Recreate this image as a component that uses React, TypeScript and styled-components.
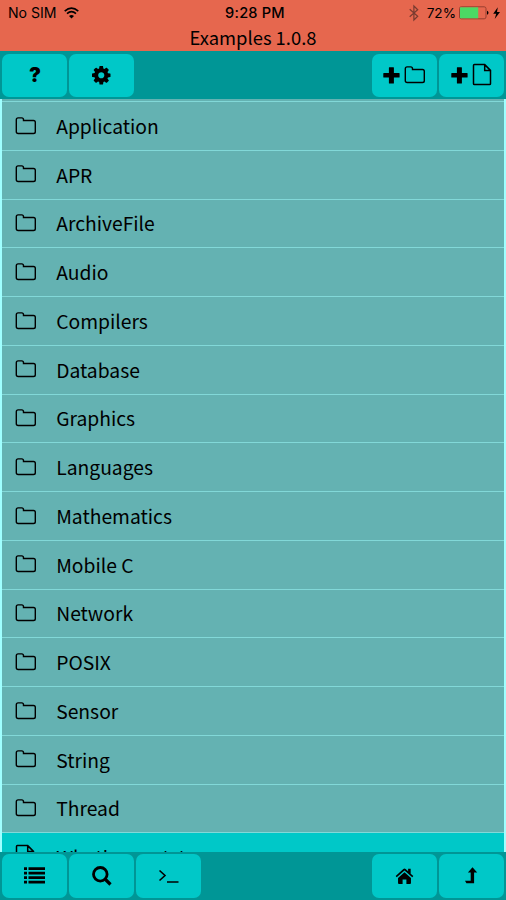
import React from "react";
import styled, { createGlobalStyle } from "styled-components";

const GlobalStyle = createGlobalStyle`
  * { box-sizing: border-box; }
  html, body { margin: 0; padding: 0; background: #009696; }
`;

const Screen = styled.div`
  width: 506px;
  height: 900px;
  display: flex;
  flex-direction: column;
  overflow: hidden;
  color: #000;
  background: #009696;
  font-family: "Noto Sans CJK SC", sans-serif;
`;

const Header = styled.header`
  flex: 0 0 51px;
  background: #e6674e;
`;

const StatusBar = styled.div`
  height: 25px;
  display: grid;
  grid-template-columns: 1fr auto 1fr;
  align-items: center;
  padding: 1px 5px 0 8px;
  font: 14.1px/24px Inter, sans-serif;
`;

const StatusGroup = styled.div<{ $end?: boolean }>`
  display: flex;
  align-items: center;
  justify-content: ${(p) => (p.$end ? "flex-end" : "flex-start")};
`;

const Carrier = styled.span`
  margin-right: 7px;
`;

const Clock = styled.span`
  padding-left: 1px;
  font-weight: 500;
  font-size: 14.6px;
  letter-spacing: 0.2px;
`;

const Percent = styled.span`
  margin: 0 3px 0 8px;
  font-size: 13.6px;
`;

const Title = styled.h1`
  margin: 0;
  height: 26px;
  font-size: 18.4px;
  line-height: 25px;
  font-weight: 400;
  text-align: center;
`;

const Toolbar = styled.nav<{ $bottom?: boolean }>`
  flex: 0 0 48px;
  display: flex;
  gap: 2px;
  padding: ${(p) => (p.$bottom ? "2px" : "3px")} 2px 2px;
  background: #009696;
`;

const ToolButton = styled.button<{ $push?: boolean }>`
  width: 65px;
  height: 100%;
  margin: 0 0 0 ${(p) => (p.$push ? "auto" : "0")};
  padding: 0;
  border: 0;
  border-radius: 7px;
  background: #00c8c8;
  display: flex;
  align-items: center;
  justify-content: center;
`;

const List = styled.ul`
  flex: 1;
  min-height: 0;
  margin: 0;
  padding: 2px 0 0;
  list-style: none;
  overflow: hidden;
  background: #64b2b2;
  border: solid #a0ffff;
  border-width: 0 2px;
`;

const Row = styled.li<{ $file?: boolean }>`
  height: 48.76px;
  display: flex;
  align-items: center;
  padding: 0 0 ${(p) => (p.$file ? "1px" : "0")} 13px;
  border-top: 1px solid #82d8d8;
  background: ${(p) => (p.$file ? "#00c8c8" : "#64b2b2")};
  font-size: 19.3px;
`;

const RowIcon = styled.span`
  width: 41.2px;
  padding-left: 0.4px;
  padding-bottom: 0.6px;
  display: flex;
`;

const Icon = styled.svg`
  display: block;
  overflow: visible;
`;

const Folder = () => (
  <Icon width="22" height="20" viewBox="0 0 22 20" fill="none" stroke="#000" strokeWidth="1.4">
    <path d="M1.3 3.700Q1.300 1.900 3.100 1.900H6.700Q8.500 1.900 8.500 3.700V4.500H18.500Q20.300 4.500 20.300 6.300V15.700Q20.300 17.500 18.500 17.500H3.100Q1.300 17.500 1.300 15.700Z" />
  </Icon>
);

const FileIcon = () => (
  <Icon width="20" height="24" viewBox="0 0 20 24" fill="none" stroke="#000" strokeWidth="1.5">
    <path d="M1.500 2.500Q1.500 1.600 2.400 1.600H12.700L18.500 7.400V20.700Q18.500 21.600 17.600 21.600H2.400Q1.500 21.600 1.500 20.700ZM12.700 1.600V7.400H18.500" />
  </Icon>
);

const Plus = () => (
  <Icon width="17" height="17" viewBox="0 0 17 17">
    <path d="M6.300.2h4.200q.4 0 .4.500v5.400h5.200q.5 0 .5.500v3.500q0 .5-.5.500h-5.200V16q0 .5-.4.500H6.300q-.4 0-.4-.5v-5.400H.8q-.5 0-.5-.5V6.600q0-.5.5-.5h5.100V.7q0-.5.4-.5z" />
  </Icon>
);

const AddGroup = styled.span`
  display: flex;
  align-items: center;
  gap: 4px;
  padding-bottom: 1px;
`;

const Question = styled.span`
  font: 900 20px/43px "Inter", sans-serif;
  padding-left: 1px;
`;

const Gear = () => (
  <Icon width="18.500" height="18.500" viewBox="0 0 1536 1536">
    <path transform="translate(0 1536) scale(1 -1) translate(0 128)" d="M1024 640q0 106-75 181t-181 75-181-75-75-181 75-181 181-75 181 75 75 181zm512 109V527q0-12-8-23t-20-13l-185-28q-19-54-39-91 35-50 107-138 10-12 10-25t-9-23q-27-37-99-108t-94-71q-12 0-26 9l-138 108q-44-23-91-38-16-136-29-186-7-28-36-28H657q-14 0-24.500 8.500T621-98l-28 184q-49 16-90 37L362 16q-10-9-25-9-14 0-25 11-126 114-165 168-7 10-7 23 0 12 8 23 15 21 51 66.500t54 70.500q-27 50-41 99L29 495q-13 2-21 12.500T0 531v222q0 12 8 23t19 13l186 28q14 46 39 92-40 57-107 138-10 12-10 24 0 10 9 23 26 36 98.500 107.500T337 1273q13 0 26-10l138-107q44 23 91 38 16 136 29 186 7 28 36 28h222q14 0 24.500-8.500T915 1378l28-184q49-16 90-37l142 107q9 9 24 9 13 0 25-10 129-119 165-170 7-8 7-22 0-12-8-23-15-21-51-66.500t-54-70.500q26-50 41-98l183-28q13-2 21-12.500t8-23.500z" />
  </Icon>
);

const Wifi = () => (
  <Icon width="15" height="12" viewBox="0 0 15 12" fill="none" stroke="#000" strokeWidth="1.600">
    <path d="M.7 4.100Q7.500-2 14.300 4.100M3 6.700q4.500-4 9 0" />
    <path d="M5 9q2.500-2 5 0L7.500 11.600z" fill="#000" stroke="none" />
  </Icon>
);

const Bluetooth = () => (
  <Icon width="10" height="16" viewBox="0 0 10 16" fill="none" stroke="#783b30" strokeWidth="1.200">
    <path d="M.7 4.300 8.700 11.300 4.900 15V1L8.700 4.700.7 11.700" />
  </Icon>
);

const Battery = () => (
  <Icon width="42" height="14" viewBox="0 0 42 14">
    <rect x=".5" y=".8" width="26.500" height="12" rx="1.800" fill="none" stroke="#983f30" />
    <path d="M1 1.300h18.200v11H1z" fill="#4cd964" />
    <path d="M28 4.800q1.500.5 1.500 2t-1.500 2z" />
    <path d="M38.800 1.300 34.200 7.700h3l-1.500 5.200 5.300-6.900h-3z" />
  </Icon>
);

const ListIcon = () => (
  <Icon width="22" height="18" viewBox="0 0 22 18">
    <path d="M0 .300h3v2.700H0zm4.500 0H21V3H4.500zM0 4.800h3v2.700H0zm4.500 0H21v2.700H4.500zM0 9.300h3V12H0zm4.500 0H21V12H4.500zM0 13.800h3v2.700H0zm4.500 0H21v2.700H4.500z" />
  </Icon>
);

const Search = () => (
  <Icon width="20" height="20" viewBox="0 0 20 20" fill="none" stroke="#000">
    <circle cx="8.300" cy="8.300" r="6.800" strokeWidth="2.800" />
    <path d="m13 13 5.500 5.500" strokeWidth="3.200" />
  </Icon>
);

const Terminal = () => (
  <Icon width="21" height="14" viewBox="0 0 21 14" fill="none" stroke="#000" strokeWidth="1.600">
    <path d="m1.500 1.500 5.500 5-5.500 5M9 13h11.500" />
  </Icon>
);

const Home = () => (
  <Icon width="19" height="17" viewBox="0 0 20 17" preserveAspectRatio="none">
    <path d="M10 4.200 3.200 10v5q0 1 1 1H8v-4.500h4V16h3.800q1 0 1-1v-5z" />
    <path d="M19.300 8 16.500 5.700V.8h-2.700v2.500L11.200 1.100Q10 .1 8.800 1.100L.7 8l1.100 1.200L10 2.500l8.200 6.700z" />
  </Icon>
);

const LevelUp = () => (
  <Icon width="13" height="18" viewBox="0 0 13 18">
    <path d="M7.500.2 12.200 5.500H9.100v10.800H1.400L0 13.700h5.700V5.500H2.900z" />
  </Icon>
);

const folders = [
  "Application", "APR", "ArchiveFile", "Audio", "Compilers",
  "Database", "Graphics", "Languages", "Mathematics", "Mobile C",
  "Network", "POSIX", "Sensor", "String", "Thread",
];

export default function App() {
  return (
    <>
      <GlobalStyle />
      <Screen>
        <Header>
          <StatusBar>
            <StatusGroup><Carrier>No SIM</Carrier><Wifi /></StatusGroup>
            <Clock>9:28 PM</Clock>
            <StatusGroup $end><Bluetooth /><Percent>72%</Percent><Battery /></StatusGroup>
          </StatusBar>
          <Title>Examples 1.0.8</Title>
        </Header>
        <Toolbar>
          <ToolButton aria-label="Help"><Question>?</Question></ToolButton>
          <ToolButton aria-label="Settings"><Gear /></ToolButton>
          <ToolButton $push aria-label="New folder"><AddGroup><Plus /><Folder /></AddGroup></ToolButton>
          <ToolButton aria-label="New file"><AddGroup><Plus /><FileIcon /></AddGroup></ToolButton>
        </Toolbar>
        <List>
          {folders.map((name) => (
            <Row key={name}><RowIcon><Folder /></RowIcon>{name}</Row>
          ))}
          <Row $file><RowIcon><FileIcon /></RowIcon>What's new.txt</Row>
        </List>
        <Toolbar $bottom>
          <ToolButton aria-label="List"><ListIcon /></ToolButton>
          <ToolButton aria-label="Search"><Search /></ToolButton>
          <ToolButton aria-label="Terminal"><Terminal /></ToolButton>
          <ToolButton $push aria-label="Home"><Home /></ToolButton>
          <ToolButton aria-label="Up"><LevelUp /></ToolButton>
        </Toolbar>
      </Screen>
    </>
  );
}
